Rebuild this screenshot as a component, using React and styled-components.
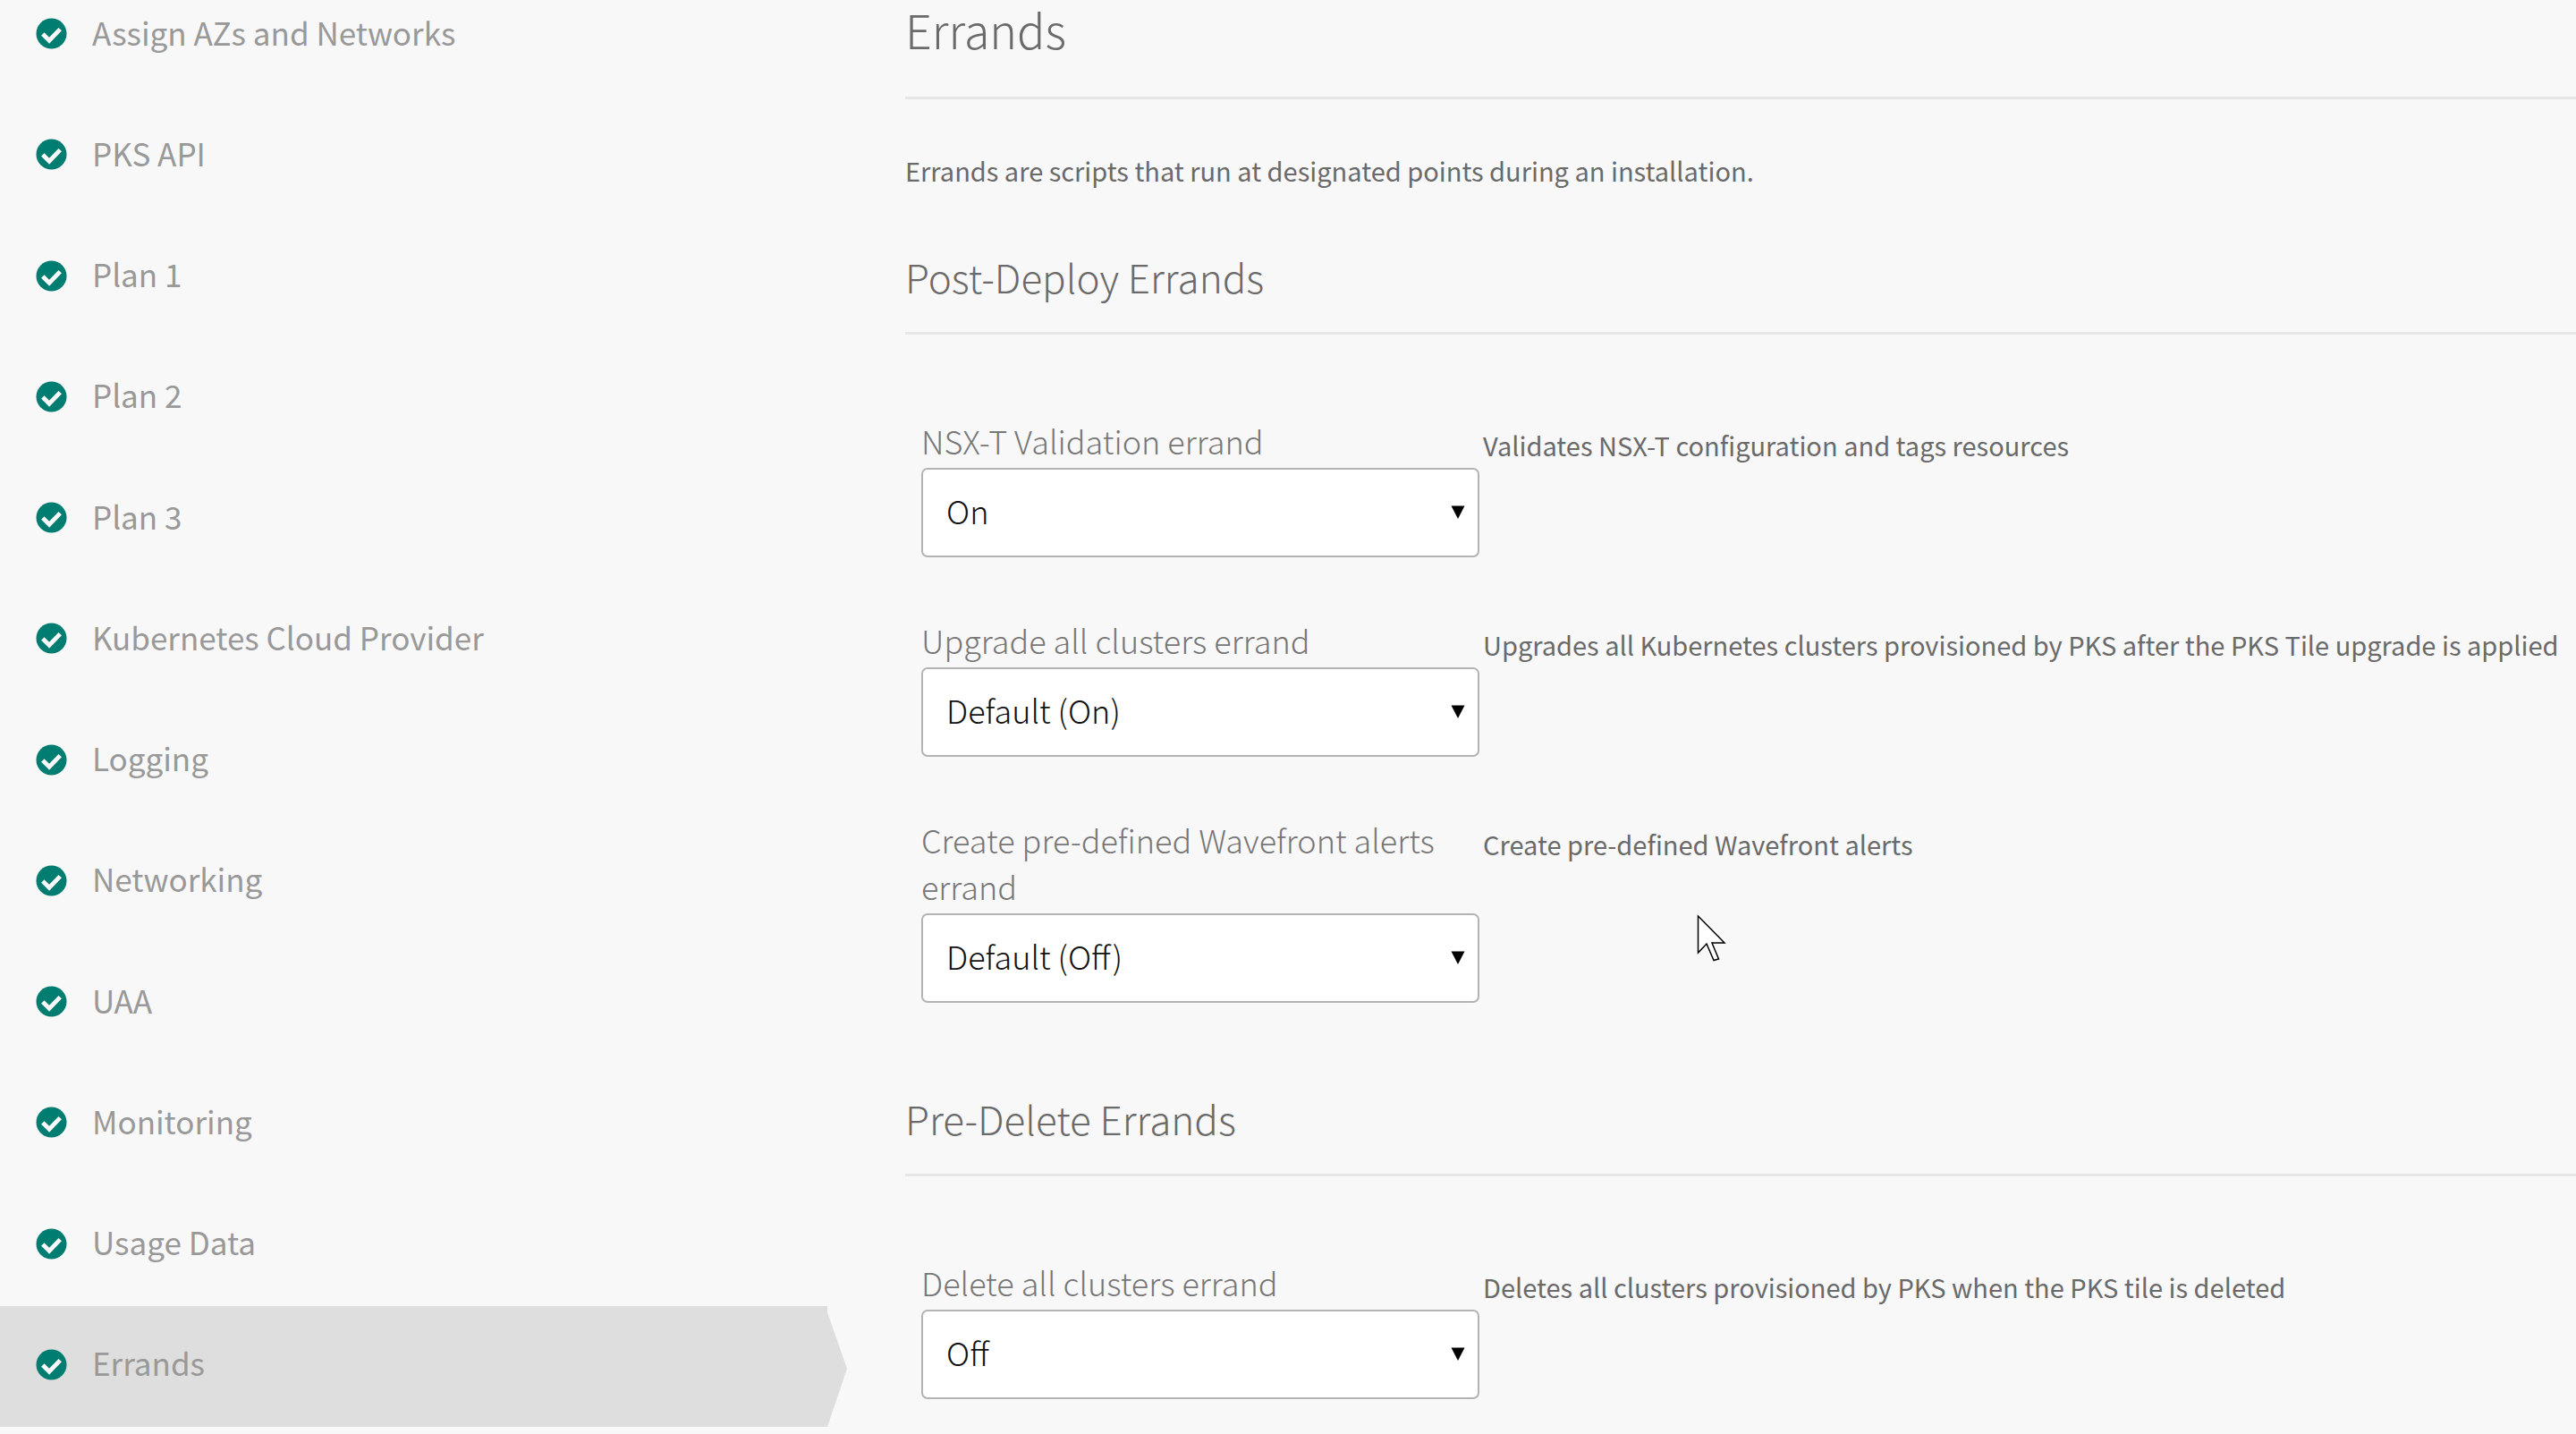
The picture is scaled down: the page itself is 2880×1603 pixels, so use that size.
import React, { useId } from "react";
import styled, { createGlobalStyle } from "styled-components";

const GlobalStyle = createGlobalStyle`
  * { box-sizing: border-box; }
  body {
    margin: 0;
    background: #f8f8f8;
    color: #6a6a6a;
    font-family: "Noto Sans CJK SC", "Open Sans", sans-serif;
  }
  h1, h2, p, ul { margin: 0; padding: 0; }
`;

const Page = styled.div`
  display: flex;
  min-height: 100vh;
`;

const Sidebar = styled.nav`
  flex: none;
  width: 947px;
  margin-top: -28px;
`;

const StepList = styled.ul`
  display: grid;
  grid-auto-rows: 1fr;
  min-height: calc(100vh + 20px);
  list-style: none;
`;

const StepLink = styled.a`
  display: flex;
  align-items: center;
  gap: 28px;
  height: 100%;
  min-height: 96px;
  padding: 0 40px 4px;
  color: #999;
  font-size: 35px;
  line-height: 52px;
  text-decoration: none;
  background: ${(p) => (p.$active ? "#dedede" : "transparent")};
  clip-path: ${(p) =>
    p.$active
      ? "polygon(0 0, calc(100% - 22px) 0, calc(100% - 22px) 7px, 100% 52%, calc(100% - 22px) 100%, 0 100%)"
      : "none"};
`;

const StepName = styled.span`
  padding-bottom: 4px;
`;

const Badge = styled.svg`
  flex: none;
  width: 35px;
  height: 35px;
`;

const Content = styled.main`
  flex: 1;
  min-width: 0;
  padding: 0 0 36px 65px;
`;

const Title = styled.h1`
  padding-bottom: 42px;
  border-bottom: 3px solid #e6e6e6;
  font-size: 52px;
  font-weight: 300;
  line-height: 66px;
`;

const Intro = styled.p`
  margin-top: 57px;
  font-size: 29px;
  line-height: 44px;
`;

const SectionTitle = styled.h2`
  margin-top: 67px;
  padding-bottom: 32px;
  border-bottom: 3px solid #e6e6e6;
  font-size: 44px;
  font-weight: 300;
  line-height: 60px;
`;

const Fields = styled.div`
  display: grid;
  gap: 66px;
  padding: 92px 0 32px 18px;
`;

const Field = styled.div`
  display: grid;
  grid-template-columns: 624px 1fr;
  gap: 4px;
  align-items: start;
`;

const Label = styled.label`
  display: block;
  padding-bottom: 5px;
  color: #777;
  font-size: 36px;
  font-weight: 300;
  line-height: 52px;
`;

const SelectBox = styled.div`
  position: relative;
`;

const Select = styled.select`
  display: block;
  width: 100%;
  height: 100px;
  padding: 0 60px 6px 26px;
  appearance: none;
  border: 2px solid #b3b3b3;
  border-radius: 7px;
  background: #fff;
  color: #111;
  font-family: inherit;
  font-size: 36px;
  font-weight: 300;
  line-height: 52px;
`;

const Arrow = styled.svg`
  position: absolute;
  top: 42px;
  right: 16px;
  width: 16px;
  height: 15px;
  pointer-events: none;
`;

const Hint = styled.p`
  padding-top: 5px;
  font-size: 29px;
  line-height: 52px;
`;

const Pointer = styled.svg`
  position: absolute;
  left: 1896px;
  top: 1022px;
  width: 34px;
  height: 54px;
  pointer-events: none;
`;

const steps = [
  "Assign AZs and Networks",
  "PKS API",
  "Plan 1",
  "Plan 2",
  "Plan 3",
  "Kubernetes Cloud Provider",
  "Logging",
  "Networking",
  "UAA",
  "Monitoring",
  "Usage Data",
  "Errands",
];

const postDeploy = [
  { label: "NSX-T Validation errand", value: "On", hint: "Validates NSX-T configuration and tags resources", fallback: "Default (On)" },
  { label: "Upgrade all clusters errand", value: "Default (On)", hint: "Upgrades all Kubernetes clusters provisioned by PKS after the PKS Tile upgrade is applied", fallback: "Default (On)" },
  { label: "Create pre-defined Wavefront alerts errand", value: "Default (Off)", hint: "Create pre-defined Wavefront alerts", fallback: "Default (Off)" },
];

const preDelete = [
  { label: "Delete all clusters errand", value: "Off", hint: "Deletes all clusters provisioned by PKS when the PKS tile is deleted", fallback: "Default (On)" },
];

function CheckBadge() {
  return (
    <Badge viewBox="0 0 36 36" aria-hidden="true">
      <circle cx="18" cy="18" r="17.5" fill="#007d71" />
      <path d="M8 18.5 L15.5 26 L28 13" fill="none" stroke="#f8f8f8" strokeWidth="5" />
    </Badge>
  );
}

function ErrandField({ label, value, hint, fallback }) {
  const id = useId();
  return (
    <Field>
      <div>
        <Label htmlFor={id}>{label}</Label>
        <SelectBox>
          <Select id={id} defaultValue={value} aria-describedby={`${id}-hint`}>
            <option>{fallback}</option>
            <option>On</option>
            <option>Off</option>
          </Select>
          <Arrow viewBox="0 0 16 15" aria-hidden="true">
            <path d="M0.5 0.5H15.5L8 15Z" fill="#000" />
          </Arrow>
        </SelectBox>
      </div>
      <Hint id={`${id}-hint`}>{hint}</Hint>
    </Field>
  );
}

export default function App() {
  return (
    <Page>
      <GlobalStyle />
      <Sidebar aria-label="Settings">
        <StepList>
          {steps.map((step) => (
            <li key={step}>
              <StepLink href="#" $active={step === "Errands"} aria-current={step === "Errands" ? "page" : undefined}>
                <CheckBadge />
                <StepName>{step}</StepName>
              </StepLink>
            </li>
          ))}
        </StepList>
      </Sidebar>
      <Content>
        <Title>Errands</Title>
        <Intro>Errands are scripts that run at designated points during an installation.</Intro>
        <SectionTitle>Post-Deploy Errands</SectionTitle>
        <Fields>
          {postDeploy.map((f) => (
            <ErrandField key={f.label} {...f} />
          ))}
        </Fields>
        <SectionTitle>Pre-Delete Errands</SectionTitle>
        <Fields>
          {preDelete.map((f) => (
            <ErrandField key={f.label} {...f} />
          ))}
        </Fields>
      </Content>
      <Pointer viewBox="0 0 34 54" aria-hidden="true">
        <path d="M2.5 2V43L12 33L20 51.5L25.5 50L18 32H32Z" fill="#fff" stroke="#000" strokeWidth="1.5" />
      </Pointer>
    </Page>
  );
}
